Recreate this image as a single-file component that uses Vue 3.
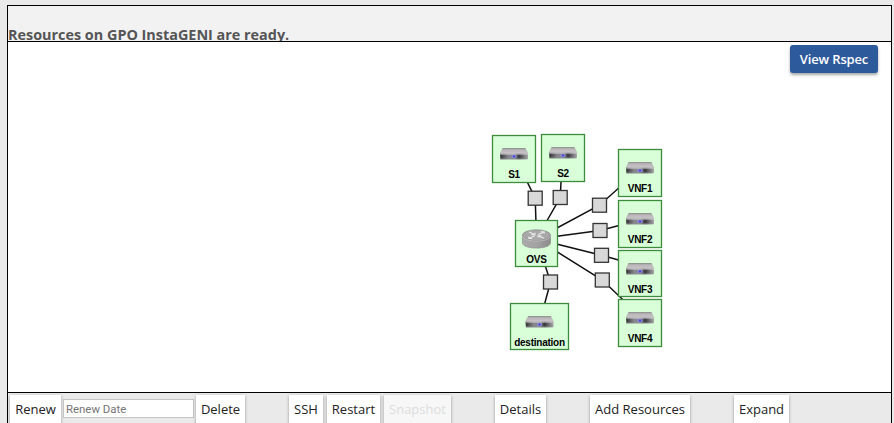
<script setup>
const nodes = [
  { id: 'S1', x: 492.5, y: 135.5, w: 43, h: 47, kind: 'server' },
  { id: 'S2', x: 541.5, y: 134.5, w: 43, h: 47, kind: 'server' },
  { id: 'VNF1', x: 618.5, y: 149.5, w: 43, h: 47, kind: 'server' },
  { id: 'VNF2', x: 618.5, y: 200.5, w: 43, h: 47, kind: 'server' },
  { id: 'VNF3', x: 618.5, y: 250.5, w: 43, h: 46, kind: 'server' },
  { id: 'VNF4', x: 618.5, y: 299.5, w: 43, h: 47, kind: 'server' },
  { id: 'OVS', x: 515.5, y: 220.5, w: 42, h: 46, kind: 'router' },
  { id: 'destination', x: 510.5, y: 303.5, w: 58, h: 46, kind: 'server' },
]

const links = [
  { x: 535.2, y: 198.2, from: [514, 155] },
  { x: 560.2, y: 197.5, from: [562.5, 154] },
  { x: 599.5, y: 205.2, from: [640, 169] },
  { x: 600, y: 230.5, from: [640, 220] },
  { x: 601.5, y: 255.3, from: [640, 266] },
  { x: 602.3, y: 280, from: [640, 316] },
  { x: 550.5, y: 282, from: [539.5, 323] },
]
const hub = [536.5, 239]

const groups = [
  { name: 'renew', items: [{ label: 'Renew', w: 51 }, { input: true }, { label: 'Delete', w: 49 }] },
  { name: 'access', items: [{ label: 'SSH', w: 34 }, { label: 'Restart', w: 53 }, { label: 'Snapshot', w: 67, off: true }] },
  { name: 'details', items: [{ label: 'Details', w: 51 }] },
  { name: 'add', items: [{ label: 'Add Resources', w: 100 }] },
  { name: 'expand', items: [{ label: 'Expand', w: 55 }] },
]
</script>

<template>
  <div class="page">
    <section class="panel">
      <header class="status">Resources on GPO InstaGENI are ready.</header>
      <main class="canvas">
        <svg class="topology" width="883" height="350" viewBox="8 42 883 350">
          <defs>
            <linearGradient id="front" x1="0" x2="1" y1="0" y2="0">
              <stop offset="0" stop-color="#303033" />
              <stop offset=".28" stop-color="#858589" />
              <stop offset=".5" stop-color="#88889a" />
              <stop offset=".68" stop-color="#38383c" />
              <stop offset="1" stop-color="#aaaaad" />
            </linearGradient>
            <linearGradient id="lid" x1="0" x2="0" y1="0" y2="1">
              <stop offset="0" stop-color="#b5b0b3" />
              <stop offset="1" stop-color="#cbc6ca" />
            </linearGradient>
            <linearGradient id="side" x1="0" x2="1" y1="0" y2="0">
              <stop offset="0" stop-color="#aaa" />
              <stop offset=".5" stop-color="#a3a3a3" />
              <stop offset="1" stop-color="#8c8c8c" />
            </linearGradient>
            <g id="server">
              <path d="M-11.5-5.5H11.5L14-.3H-14Z" fill="url(#lid)" stroke="#aaa5a8" stroke-width=".5" />
              <path d="M-11.5-5.6H11.5" stroke="#77777a" stroke-width=".7" />
              <path d="M-14-.5H14V4.5Q14 5-13.6 5Z" fill="url(#front)" />
              <path d="M-14-.1H14" stroke="#dadadd" stroke-width=".8" />
              <path d="M-13.5 4.7H13.5" stroke="#8f8f94" stroke-width=".8" />
              <rect x="-2.5" y="1" width="5" height="2.6" fill="#8c8ccc" />
              <circle cx="0" cy="2.3" r="1" fill="#3434ed" />
            </g>
            <g id="router">
              <path d="M-14-3.9V3.6C-14 10.7 14 10.7 14 3.6V-3.9Z" fill="url(#side)" stroke="#858585" stroke-width=".6" />
              <ellipse cx="0" cy="-4" rx="14" ry="5.5" fill="#a8a8a8" stroke="#7f7f7f" stroke-width=".6" />
              <path d="M-14-3.4C-13 3.6 13 3.6 14-3.4" fill="none" stroke="#c7c7c7" stroke-width=".7" />
              <g fill="none" stroke="#e8e8e8" stroke-width="1.1">
                <path d="M-7.5-7.2L-1.8-4.8M-5-4.6H-1.5V-6.4" />
                <path d="M7.5-.9L1.8-3.3M5-3.4H1.5V-1.7" />
                <path d="M1.6-4.7L7.2-7M4.2-7.4H7.7V-5.7" />
                <path d="M-1.6-3.4L-7.2-1.1M-4.2-.7H-7.7V-2.4" />
              </g>
            </g>
          </defs>
          <g class="wires">
            <polyline
              v-for="(l, i) in links"
              :key="i"
              :points="`${hub[0]},${hub[1]} ${l.x},${l.y} ${l.from[0]},${l.from[1]}`"
            />
          </g>
          <rect
            v-for="(l, i) in links"
            :key="i"
            class="joint"
            :x="l.x - 7"
            :y="l.y - 7"
            width="14"
            height="14"
          />
          <g v-for="n in nodes" :key="n.id">
            <rect class="node" :x="n.x" :y="n.y" :width="n.w" :height="n.h" />
            <use :href="'#' + n.kind" :x="n.x + n.w / 2" :y="n.y + 18.7" />
            <text class="name" :x="n.x + n.w / 2" :y="n.y + 42.9">{{ n.id }}</text>
          </g>
        </svg>
        <button class="rspec">View Rspec</button>
      </main>
      <footer class="toolbar">
        <div v-for="g in groups" :key="g.name" class="group" :class="g.name">
          <template v-for="(item, i) in g.items" :key="i">
            <input v-if="item.input" class="date" placeholder="Renew Date" />
            <button v-else class="action" :class="{ off: item.off }" :style="{ width: item.w + 'px' }">{{ item.label }}</button>
          </template>
        </div>
      </footer>
    </section>
  </div>
</template>

<style>
body {
  background: #eaeaea;
}
</style>

<style scoped>
.page {
  box-sizing: border-box;
  height: 423px;
  padding: 5px 2px 0 7px;
  overflow: hidden;
  font-family: "Open Sans", sans-serif;
}
.panel {
  box-sizing: border-box;
  height: 418px;
  border: 1px solid #000;
  border-bottom: 0;
}
.status {
  box-sizing: border-box;
  height: 35px;
  padding-top: 18px;
  background: #f2f2f2;
  color: #555;
  font-size: 14.4px;
  font-weight: 700;
  line-height: 22px;
  white-space: nowrap;
}
.canvas {
  position: relative;
  height: 350px;
  border-top: 1px solid #000;
  border-bottom: 1px solid #000;
  background: #fff;
}
.topology {
  display: block;
}
.wires {
  fill: none;
  stroke: #111;
  stroke-width: 1.5;
}
.joint {
  fill: #d8d8d8;
  stroke: #333;
  stroke-width: 1.3;
}
.node {
  fill: #d9ffd9;
  stroke: #3c8c3c;
  stroke-width: 1.3;
}
.name {
  fill: #000;
  font: 700 10px "Liberation Sans", Arial, sans-serif;
  letter-spacing: -0.25px;
  text-anchor: middle;
}
.rspec {
  position: absolute;
  top: 3px;
  right: 13px;
  width: 88px;
  height: 28px;
  padding: 0;
  border: 0;
  border-radius: 3px;
  background: #2d5a9a;
  box-shadow: 0 2px 3px rgba(0, 0, 0, 0.35);
  color: #fff;
  font: 600 13px/28px "Open Sans", sans-serif;
  letter-spacing: -0.15px;
}
.toolbar {
  display: flex;
  gap: 44px;
  height: 30px;
  padding: 2px 0 0 2px;
}
.group {
  display: flex;
  gap: 4px;
}
.group.renew {
  gap: 2px;
}
.action {
  flex: none;
  height: 34px;
  padding: 0 0 5px;
  border: 0;
  background: #fff;
  box-shadow: 0 1px 3px rgba(0, 0, 0, 0.35);
  color: #222;
  font: 400 13px/27px "Open Sans", sans-serif;
  white-space: nowrap;
}
.action.off {
  background: #f7f7f7;
  color: #ddd;
}
.date {
  box-sizing: border-box;
  width: 131px;
  height: 19px;
  margin-top: 4px;
  padding: 1px 2px 0;
  border: 1px solid #c4c4c4;
  border-radius: 0;
  background: #fff;
  font: 11.4px Roboto, sans-serif;
}
.date::placeholder {
  color: #757575;
}
</style>
